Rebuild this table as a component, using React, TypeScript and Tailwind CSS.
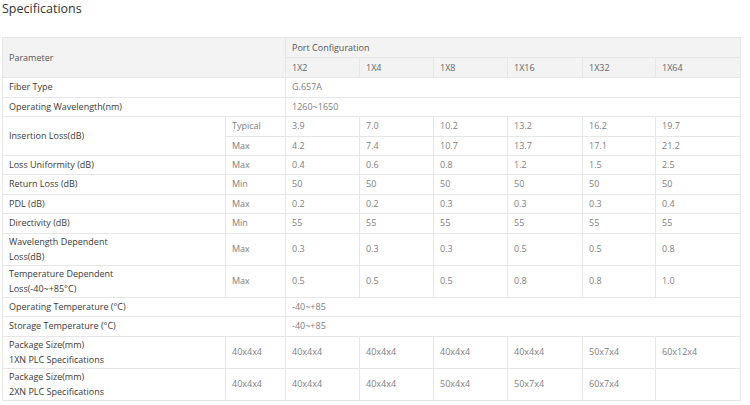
const font = 'font-["Open_Sans","Liberation_Sans",sans-serif]';

type Row = {
  name: string[];
  sub?: string;
  values?: string[];
  span?: string;
  tall?: boolean;
};

const rows: Row[] = [
  { name: ['Fiber Type'], span: 'G.657A' },
  { name: ['Operating Wavelength(nm)'], span: '1260~1650' },
  { name: ['Loss Uniformity (dB)'], sub: 'Max', values: ['0.4', '0.6', '0.8', '1.2', '1.5', '2.5'] },
  { name: ['Return Loss (dB)'], sub: 'Min', values: ['50', '50', '50', '50', '50', '50'] },
  { name: ['PDL (dB)'], sub: 'Max', values: ['0.2', '0.2', '0.3', '0.3', '0.3', '0.4'] },
  { name: ['Directivity (dB)'], sub: 'Min', values: ['55', '55', '55', '55', '55', '55'] },
  { name: ['Wavelength Dependent', 'Loss(dB)'], sub: 'Max', values: ['0.3', '0.3', '0.3', '0.5', '0.5', '0.8'], tall: true },
  { name: ['Temperature Dependent', 'Loss(-40~+85°C)'], sub: 'Max', values: ['0.5', '0.5', '0.5', '0.8', '0.8', '1.0'], tall: true },
  { name: ['Operating Temperature (°C)'], span: '-40~+85' },
  { name: ['Storage Temperature (°C)'], span: '-40~+85' },
  { name: ['Package Size(mm)', '1XN PLC Specifications'], sub: '40x4x4', values: ['40x4x4', '40x4x4', '40x4x4', '40x4x4', '50x7x4', '60x12x4'], tall: true },
  { name: ['Package Size(mm)', '2XN PLC Specifications'], sub: '40x4x4', values: ['40x4x4', '40x4x4', '50x4x4', '50x7x4', '60x7x4', ''], tall: true },
];

const ports = ['1X2', '1X4', '1X8', '1X16', '1X32', '1X64'];
const cell = 'border border-[#e6e6e6] px-[6px] py-0 text-left align-middle font-normal';
const val = `${cell} text-[#808080]`;

export default function App() {
  return (
    <div className={`${font} w-[750px] bg-white px-[2px] pt-[1px] text-[9px] leading-[14px]`}>
      <h2 className="text-[12.5px] leading-[16px] text-[#333]">Specifications</h2>
      <table className="mt-[20px] w-[738px] table-fixed border-collapse">
        <colgroup>
          <col className="w-[223px]" />
          <col className="w-[60px]" />
          <col className="w-[74px]" />
          <col className="w-[74px]" />
          <col className="w-[74px]" />
          <col className="w-[75px]" />
          <col className="w-[73px]" />
          <col className="w-[85px]" />
        </colgroup>
        <thead className="bg-[#f3f3f3] text-[#555]">
          <tr className="h-[20px]">
            <th colSpan={2} rowSpan={2} className={cell}>Parameter</th>
            <th colSpan={6} className={cell}>Port Configuration</th>
          </tr>
          <tr className="h-[20px]">
            {ports.map((p) => (
              <th key={p} className={`${cell} text-[#666]`}>{p}</th>
            ))}
          </tr>
        </thead>
        <tbody className="text-[#3a3a3a]">
          {rows.slice(0, 2).map((r) => (
            <tr key={r.name[0]} className="h-[19.5px]">
              <td colSpan={2} className={cell}>{r.name[0]}</td>
              <td colSpan={6} className={val}>{r.span}</td>
            </tr>
          ))}
          <tr className="h-[19.5px]">
            <td rowSpan={2} className={cell}>Insertion Loss(dB)</td>
            <td className={val}>Typical</td>
            {['3.9', '7.0', '10.2', '13.2', '16.2', '19.7'].map((v, i) => (
              <td key={i} className={val}>{v}</td>
            ))}
          </tr>
          <tr className="h-[19px]">
            <td className={val}>Max</td>
            {['4.2', '7.4', '10.7', '13.7', '17.1', '21.2'].map((v, i) => (
              <td key={i} className={val}>{v}</td>
            ))}
          </tr>
          {rows.slice(2).map((r, idx) =>
            r.span ? (
              <tr key={idx} className="h-[19.5px]">
                <td colSpan={2} className={cell}>{r.name[0]}</td>
                <td colSpan={6} className={val}>{r.span}</td>
              </tr>
            ) : (
              <tr key={idx} className={r.tall ? 'h-[32px]' : 'h-[19.5px]'}>
                <td className={`${cell} ${r.tall ? 'leading-[15.5px]' : ''}`}>
                  {r.name.map((n) => (
                    <div key={n}>{n}</div>
                  ))}
                </td>
                <td className={val}>{r.sub}</td>
                {r.values!.map((v, i) => (
                  <td key={i} className={val}>{v}</td>
                ))}
              </tr>
            ),
          )}
        </tbody>
      </table>
    </div>
  );
}
